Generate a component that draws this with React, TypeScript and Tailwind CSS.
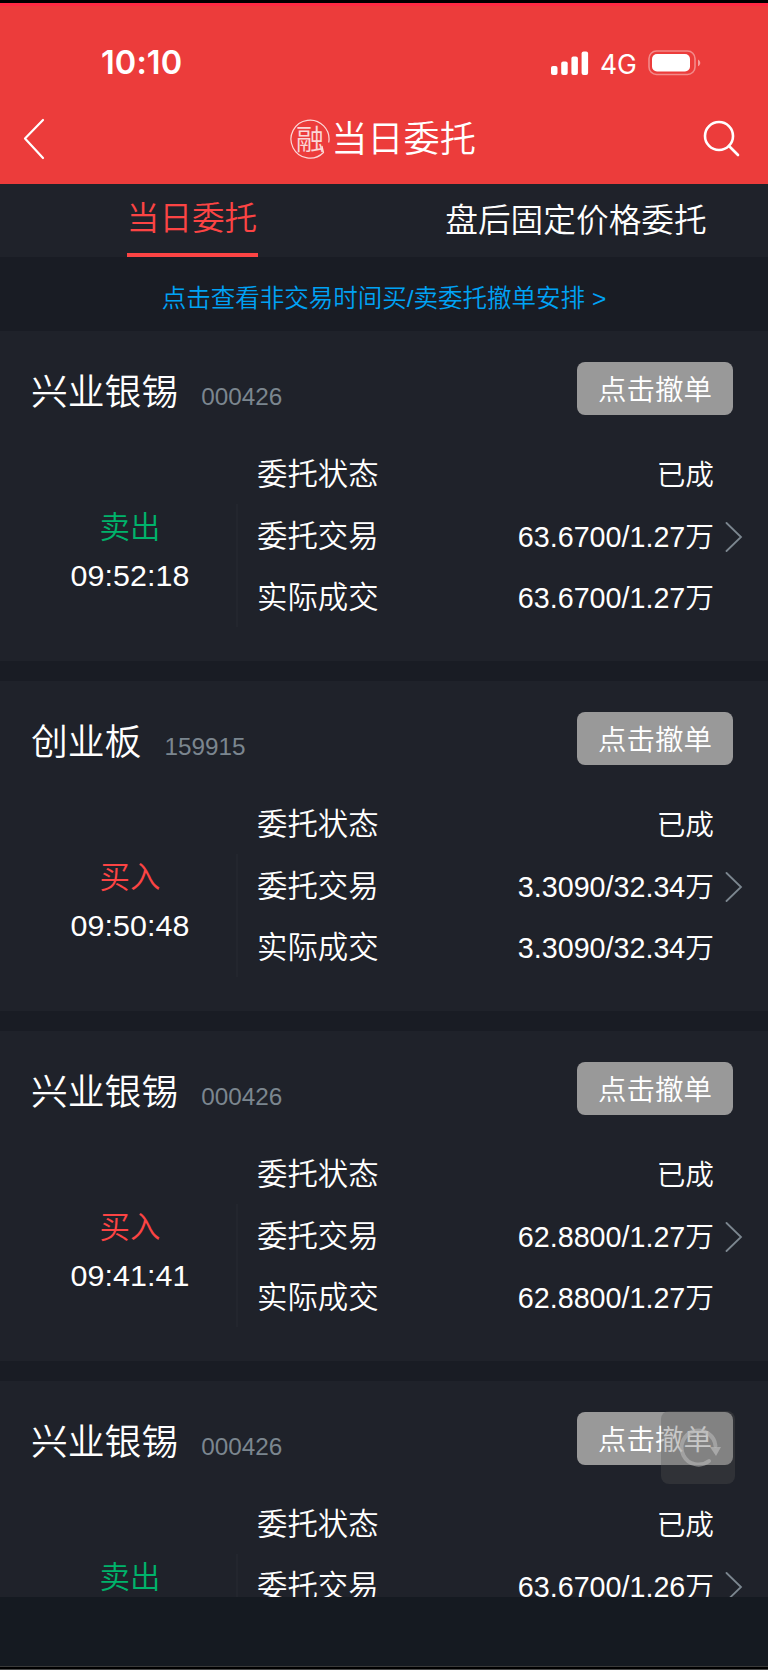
import { Fragment } from "react";

type Order = {
  name: string;
  code: string;
  side: "buy" | "sell";
  time?: string;
  status: string;
  entrusted: string;
  filled?: string;
};

const orders: Order[] = [
  { name: "兴业银锡", code: "000426", side: "sell", time: "09:52:18", status: "已成", entrusted: "63.6700/1.27万", filled: "63.6700/1.27万" },
  { name: "创业板", code: "159915", side: "buy", time: "09:50:48", status: "已成", entrusted: "3.3090/32.34万", filled: "3.3090/32.34万" },
  { name: "兴业银锡", code: "000426", side: "buy", time: "09:41:41", status: "已成", entrusted: "62.8800/1.27万", filled: "62.8800/1.27万" },
  { name: "兴业银锡", code: "000426", side: "sell", status: "已成", entrusted: "63.6700/1.26万" },
];

function StatusBar() {
  return (
    <div className="flex h-[100px] items-center justify-between pl-[101px] pr-[67px] pt-[13px] font-['Inter',sans-serif]">
      <span className="pt-[2px] text-[32.5px] font-semibold leading-none tracking-[0.1px]">10:10</span>
      <div className="flex items-center">
        <svg width="38" height="24" viewBox="0 0 38 24" fill="currentColor">
          <rect x="0" y="15" width="6.5" height="9" rx="2" />
          <rect x="10.2" y="10.5" width="6.5" height="13.5" rx="2" />
          <rect x="20.4" y="5.5" width="6.5" height="18.5" rx="2" />
          <rect x="30.6" y="0.5" width="6.5" height="23.5" rx="2" />
        </svg>
        <span className="ml-[11px] w-[37px] pt-[3px] text-[26.5px] leading-none">4G</span>
        <svg className="ml-[11px]" width="53" height="26" viewBox="0 0 53 26" fill="none">
          <rect x="1" y="1" width="46" height="23.5" rx="7.5" stroke="white" strokeOpacity="0.4" strokeWidth="1.6" />
          <rect x="4" y="4" width="38" height="17.5" rx="5" fill="white" />
          <path d="M50 9.5c3 1.4 3 5.4 0 6.8z" fill="white" fillOpacity="0.5" />
        </svg>
      </div>
    </div>
  );
}

function TitleBar() {
  return (
    <div className="flex h-[66px] items-center justify-between pl-[23px] pr-[28px]">
      <svg width="22" height="42" viewBox="0 0 22 42" fill="none" stroke="currentColor" strokeWidth="2.2" strokeLinecap="round" strokeLinejoin="round">
        <path d="M20 2L2 20.5L20 40" />
      </svg>
      <div className="ml-[19px] flex items-center">
        <span className="relative flex h-10 w-10 items-center justify-center">
          <svg className="absolute inset-0" width="40" height="40" viewBox="0 0 40 40" fill="none" stroke="currentColor" strokeOpacity="0.8" strokeWidth="1.2">
            <path d="M38.7 23.5A19 19 0 1 0 33.5 33.5L32 27" />
          </svg>
          <span className="pt-[3px] text-[28px] font-[350] leading-none text-white/80">融</span>
        </span>
        <h1 className="ml-[1px] pt-[2px] text-[36.2px] font-[350] leading-none">当日委托</h1>
      </div>
      <svg width="38" height="38" viewBox="0 0 38 38" fill="none" stroke="currentColor" strokeWidth="2.6" strokeLinecap="round">
        <circle cx="17" cy="16" r="14" />
        <path d="M27 26L36 35" />
      </svg>
    </div>
  );
}

function Tabs() {
  return (
    <div className="grid h-[73px] shrink-0 grid-cols-2 bg-[#1f222a]">
      <div className="flex justify-center">
        <div className="flex h-full w-[131px] items-center justify-center border-b-4 border-[#fc4444] pt-[1px] text-[32.6px] font-[350] leading-none text-[#fc4444]">
          当日委托
        </div>
      </div>
      <div className="flex items-center justify-center pt-[2px] text-[32.7px] font-[350] leading-none">
        盘后固定价格委托
      </div>
    </div>
  );
}

function OrderCard({ order }: { order: Order }) {
  const rows = [
    { label: "委托状态", value: order.status },
    { label: "委托交易", value: order.entrusted, arrow: true },
    ...(order.filled ? [{ label: "实际成交", value: order.filled }] : []),
  ];
  return (
    <article className="h-[330px] shrink-0 bg-[#1f222a]">
      <div className="flex h-[112px] items-start justify-between pl-[31px] pr-[35px] pt-[31px]">
        <div className="flex items-baseline pt-[13px]">
          <h2 className="text-[36.8px] font-[350] leading-none">{order.name}</h2>
          <span className="ml-[23px] text-[24.3px] leading-none text-[#7b868f]">{order.code}</span>
        </div>
        <button className="flex h-[53px] w-[156px] items-center justify-center rounded-lg bg-[#999999] pt-[3px] text-[28.5px] font-[350] leading-none">
          点击撤单
        </button>
      </div>
      <div className="flex h-[184px]">
        <div className="mt-[61px] flex w-[238px] flex-col items-center border-r-2 border-[#23262e] pl-[24px] pt-[8px] text-[30.4px] leading-none">
          <span className={order.side === "buy" ? "font-[350] text-[#fc4444]" : "font-[350] text-[#00b36b]"}>
            {order.side === "buy" ? "买入" : "卖出"}
          </span>
          {order.time && <span className="mt-[18px] tracking-[0.1px]">{order.time}</span>}
        </div>
        <dl className="grid flex-1 grid-cols-[1fr_auto_54px] grid-rows-3 items-center pl-[19px]">
          {rows.map((row) => (
            <Fragment key={row.label}>
              <dt className="pt-[2px] text-[30.4px] font-[350] leading-none">{row.label}</dt>
              <dd className="pt-[4px] text-right text-[28.7px] font-[350] leading-none">{row.value}</dd>
              <span className="pl-[11px] pt-[5px]">
                {row.arrow && (
                  <svg width="18" height="30" viewBox="0 0 18 30" fill="none" stroke="#7b868f" strokeWidth="1.8" strokeLinecap="round">
                    <path d="M1.5 1L16 15L1.5 29" />
                  </svg>
                )}
              </span>
            </Fragment>
          ))}
        </dl>
      </div>
    </article>
  );
}

export default function App() {
  return (
    <div className="relative flex h-[1670px] w-[768px] flex-col overflow-hidden bg-[#191c24] font-['Liberation_Sans','Noto_Sans_CJK_SC',sans-serif] text-white">
      <header className="h-[184px] shrink-0 border-t-[3px] border-black bg-[#ec3c3b]">
        <div className="h-[3px] bg-[#ff2942]" />
        <StatusBar />
        <TitleBar />
      </header>
      <Tabs />
      <a className="flex h-[74px] shrink-0 items-center justify-center pt-[11px] text-[24.5px] font-[350] leading-none text-[#00a2f5]">
        点击查看非交易时间买/卖委托撤单安排 &gt;
      </a>
      <main className="flex h-[1266px] shrink-0 flex-col gap-5 overflow-hidden">
        {orders.map((order, i) => (
          <OrderCard key={i} order={order} />
        ))}
      </main>
      <footer className="flex-1 border-b border-[#4a4a4a] bg-[#151a21]">
        <div className="h-[69px]" />
        <div className="h-[3px] border-t border-[#3a3a3a] bg-black" />
      </footer>

      <button className="absolute left-[661px] top-[1411px] flex h-[73px] w-[74px] items-center justify-center rounded-lg bg-[#545454]/32">
        <svg width="46" height="46" viewBox="0 0 46 46" fill="none" stroke="#b8b8b8" strokeOpacity="0.6" strokeWidth="4" strokeLinecap="round">
          <path d="M34 36A17 17 0 1 1 40.5 21" />
          <path d="M35 22H46L41 31Z" fill="#b8b8b8" fillOpacity="0.7" stroke="none" />
        </svg>
      </button>
    </div>
  );
}
